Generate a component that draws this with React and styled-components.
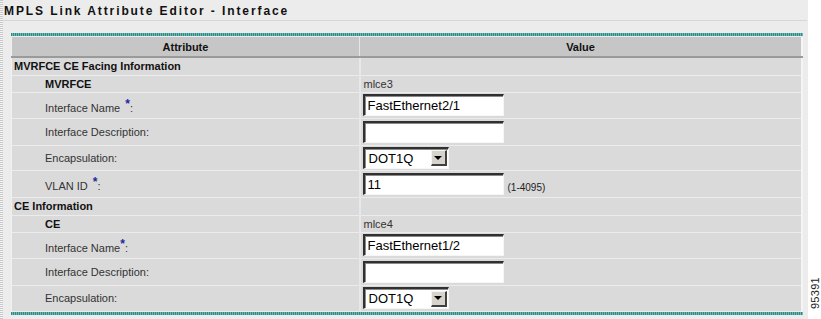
import React from "react";
import styled, { createGlobalStyle } from "styled-components";

const Global = createGlobalStyle`
  html, body { margin: 0; padding: 0; background: #ffffff; }
  body { font-family: "Liberation Sans", Arial, sans-serif; }
`;

const Page = styled.div`
  position: relative;
  width: 821px;
  height: 319px;
  background: #ffffff;
  overflow: hidden;
`;

const Panel = styled.div`
  width: 804px;
  height: 319px;
  background: #ececec;
  border-left: 3px solid transparent;
  border-image: repeating-linear-gradient(180deg, #c8c8c8 0 1px, #f4f4f4 1px 2px) 0 0 0 3;
  border-right: 1px solid #dcdcdc;
  box-sizing: content-box;
`;

const TitleBar = styled.div`
  height: 21px;
  line-height: 22px;
  padding-left: 1px;
  border-bottom: 1px solid #d6d6d6;
  font-weight: bold;
  font-size: 12px;
  letter-spacing: 1.9px;
  color: #111;
  box-sizing: border-box;
  width: 804px;
`;

const TableWrap = styled.div`
  margin: 12px 0 0 8px;
  width: 792px;
`;

const TealRule = styled.div`
  height: 3px;
  background: repeating-linear-gradient(90deg, #2d8a86 0 1px, #6fb8b4 1px 2px);
`;

const Table = styled.table`
  width: 792px;
  border-collapse: collapse;
  table-layout: fixed;
  margin-top: 1px;
  border-left: 1px solid #f0f0f0;
  border-right: 2px solid #f4f4f4;
`;

const HeadCell = styled.th`
  height: 19px;
  padding: 0;
  background: #c6c6c6;
  border-bottom: 2px solid #9a9a9a;
  border-right: ${(p) => (p.$divider ? "1px solid #e6e6e6" : "none")};
  font-size: 11px;
  font-weight: bold;
  color: #111;
  text-align: center;
`;

const Row = styled.tr`
  height: ${(p) => p.$h}px;
`;

const Cell = styled.td`
  padding: 0 0 0 ${(p) => p.$indent || 0}px;
  background: #dadada;
  border-bottom: 1px solid #ececec;
  border-right: ${(p) => (p.$divider ? "2px solid #e8e8e8" : "none")};
  font-size: 11px;
  color: #333;
  vertical-align: middle;
  white-space: nowrap;
`;

const SectionLabel = styled.span`
  font-weight: bold;
  color: #111;
  padding-left: 2px;
`;

const StrongLabel = styled.span`
  font-weight: bold;
  color: #111;
`;

const Required = styled.span`
  color: #1a2aa0;
  font-size: 12px;
  font-weight: bold;
  vertical-align: 4px;
  margin-left: ${(p) => (p.$tight ? "0" : "2px")};
`;

const ValueText = styled.span`
  padding-left: 1px;
`;

const TextBox = styled.div`
  display: inline-flex;
  align-items: center;
  vertical-align: middle;
  width: 141px;
  height: 22px;
  box-sizing: border-box;
  background: #ffffff;
  border-style: solid;
  border-width: 2px 1px 1px 2px;
  border-color: #303030 #f6f6f6 #f6f6f6 #303030;
  box-shadow: inset 1px 1px 0 #8a8a8a;
  padding-left: 3px;
  font-size: 13px;
  color: #000;
`;

const Hint = styled.span`
  font-size: 10px;
  color: #222;
  margin-left: 4px;
  vertical-align: -5px;
`;

const SelectBox = styled.div`
  display: inline-flex;
  align-items: center;
  justify-content: space-between;
  vertical-align: middle;
  width: 86px;
  height: 22px;
  box-sizing: border-box;
  background: #ffffff;
  border-style: solid;
  border-width: 2px 1px 1px 2px;
  border-color: #303030 #f6f6f6 #f6f6f6 #303030;
  box-shadow: inset 1px 1px 0 #8a8a8a;
  padding: 0 1px 0 4px;
  font-size: 13px;
  color: #000;
`;

const DropButton = styled.span`
  width: 16px;
  height: 16px;
  box-sizing: border-box;
  background: #d6d3cc;
  border-style: solid;
  border-width: 1px 2px 2px 1px;
  border-color: #f4f4f4 #404040 #404040 #f4f4f4;
  display: flex;
  align-items: center;
  justify-content: center;
`;

const Arrow = styled.span`
  width: 0;
  height: 0;
  border-left: 4px solid transparent;
  border-right: 4px solid transparent;
  border-top: 4px solid #000;
`;

const FigureId = styled.div`
  position: absolute;
  right: -10px;
  top: 287px;
  transform: rotate(-90deg);
  font-size: 11px;
  color: #222;
  letter-spacing: 0.3px;
`;

const Star = ({ tight }) => <Required $tight={tight}>*</Required>;

const Select = ({ value }) => (
  <SelectBox>
    {value}
    <DropButton>
      <Arrow />
    </DropButton>
  </SelectBox>
);

const sections = [
  {
    title: "MVRFCE CE Facing Information",
    rows: [
      { label: <StrongLabel>MVRFCE</StrongLabel>, value: <ValueText>mlce3</ValueText>, h: 17 },
      { label: <>Interface Name <Star />:</>, value: <TextBox>FastEthernet2/1</TextBox>, h: 26 },
      { label: <>Interface Description:</>, value: <TextBox />, h: 27 },
      { label: <>Encapsulation:</>, value: <Select value="DOT1Q" />, h: 25 },
      {
        label: <>VLAN ID <Star />:</>,
        value: (
          <>
            <TextBox>11</TextBox>
            <Hint>(1-4095)</Hint>
          </>
        ),
        h: 27,
      },
    ],
  },
  {
    title: "CE Information",
    rows: [
      { label: <StrongLabel>CE</StrongLabel>, value: <ValueText>mlce4</ValueText>, h: 17 },
      { label: <>Interface Name<Star tight />:</>, value: <TextBox>FastEthernet1/2</TextBox>, h: 26 },
      { label: <>Interface Description:</>, value: <TextBox />, h: 27 },
      { label: <>Encapsulation:</>, value: <Select value="DOT1Q" />, h: 26 },
    ],
  },
];

export default function App() {
  return (
    <>
      <Global />
      <Page>
        <Panel>
          <TitleBar>MPLS Link Attribute Editor - Interface</TitleBar>
          <TableWrap>
            <TealRule />
            <Table>
              <colgroup>
                <col style={{ width: "348px" }} />
                <col />
              </colgroup>
              <thead>
                <tr>
                  <HeadCell $divider>Attribute</HeadCell>
                  <HeadCell>Value</HeadCell>
                </tr>
              </thead>
              <tbody>
                {sections.map((s) => (
                  <React.Fragment key={s.title}>
                    <Row $h={18}>
                      <Cell $divider>
                        <SectionLabel>{s.title}</SectionLabel>
                      </Cell>
                      <Cell />
                    </Row>
                    {s.rows.map((r, i) => (
                      <Row key={i} $h={r.h}>
                        <Cell $divider $indent={33}>
                          {r.label}
                        </Cell>
                        <Cell $indent={2}>{r.value}</Cell>
                      </Row>
                    ))}
                  </React.Fragment>
                ))}
              </tbody>
            </Table>
            <TealRule />
          </TableWrap>
        </Panel>
        <FigureId>95391</FigureId>
      </Page>
    </>
  );
}
